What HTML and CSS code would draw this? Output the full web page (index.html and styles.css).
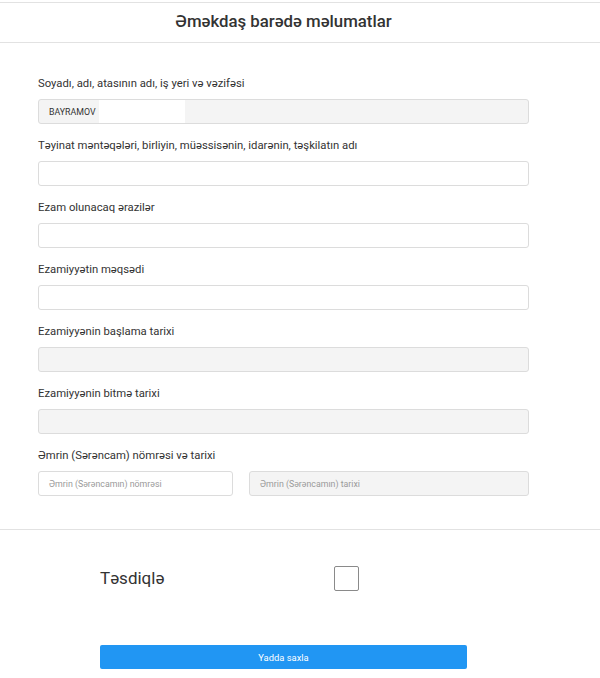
FILE: index.html
```html
<!DOCTYPE html>
<html lang="az">
<head>
<meta charset="utf-8">
<title>Əməkdaş barədə məlumatlar</title>
<link rel="stylesheet" href="styles.css">
</head>
<body>
<header class="header">
  <h1 class="title">Əməkdaş barədə məlumatlar</h1>
</header>
<main class="form">
  <div class="group">
    <div class="label">Soyadı, adı, atasının adı, iş yeri və vəzifəsi</div>
    <div class="field field-gray"><span class="value">BAYRAMOV</span><span class="redact"></span></div>
  </div>
  <div class="group">
    <div class="label">Təyinat məntəqələri, birliyin, müəssisənin, idarənin, təşkilatın adı</div>
    <div class="field"></div>
  </div>
  <div class="group">
    <div class="label">Ezam olunacaq ərazilər</div>
    <div class="field"></div>
  </div>
  <div class="group">
    <div class="label">Ezamiyyətin məqsədi</div>
    <div class="field"></div>
  </div>
  <div class="group">
    <div class="label">Ezamiyyənin başlama tarixi</div>
    <div class="field field-gray"></div>
  </div>
  <div class="group">
    <div class="label">Ezamiyyənin bitmə tarixi</div>
    <div class="field field-gray"></div>
  </div>
  <div class="group">
    <div class="label">Əmrin (Sərəncam) nömrəsi və tarixi</div>
    <div class="row">
      <div class="field"><span class="placeholder">Əmrin (Sərəncamın) nömrəsi</span></div>
      <div class="field field-gray"><span class="placeholder">Əmrin (Sərəncamın) tarixi</span></div>
    </div>
  </div>
</main>
<section class="confirm">
  <span class="confirm-label">Təsdiqlə</span>
  <span class="checkbox"></span>
</section>
<div class="actions">
  <button class="btn" type="button">Yadda saxla</button>
</div>
</body>
</html>
```
FILE: styles.css
```css
html, body {
  margin: 0;
  padding: 0;
  background: #fff;
}
body {
  font-family: Roboto, "Liberation Sans", Arial, sans-serif;
  color: #333;
  padding-top: 2px;
}
.header {
  border-top: 1px solid #e2e2e2;
  border-bottom: 1px solid #e2e2e2;
  height: 39px;
  display: flex;
  align-items: center;
  justify-content: center;
  padding-right: 33px;
}
.title {
  margin: 0;
  font-size: 16.8px;
  font-weight: 500;
  color: #333;
  position: relative;
  top: -2px;
}
.form {
  padding: 34px 0 33px 38px;
  border-bottom: 1px solid #e2e2e2;
}
.group {
  width: 491px;
  margin-bottom: 15px;
}
.group:last-child {
  margin-bottom: 0;
}
.label {
  font-size: 11.3px;
  line-height: 14px;
  height: 14px;
  margin-bottom: 8px;
  color: #333;
  white-space: nowrap;
}
.field {
  box-sizing: border-box;
  height: 25px;
  border: 1px solid #dcdcdc;
  border-radius: 3px;
  background: #fff;
  display: flex;
  align-items: center;
  padding-left: 10px;
  font-size: 8.8px;
}
.field-gray {
  background: #f4f4f4;
}
.value {
  color: #333;
  text-transform: uppercase;
}
.redact {
  display: block;
  width: 86px;
  height: 23px;
  background: #fff;
  margin-left: 3px;
}
.placeholder {
  color: #9a9a9a;
}
.row {
  display: grid;
  grid-template-columns: 195px 1fr;
  gap: 16px;
}
.confirm {
  display: flex;
  align-items: center;
  padding: 35px 0 0 100px;
  height: 26px;
}
.confirm-label {
  font-size: 17px;
  color: #333;
  width: 234px;
}
.checkbox {
  box-sizing: border-box;
  width: 25px;
  height: 25px;
  border: 1px solid #8a8a8a;
  border-radius: 2px;
  background: #fff;
}
.actions {
  padding: 54px 0 0 100px;
}
.btn {
  display: block;
  width: 367px;
  height: 24px;
  border: none;
  border-radius: 2px;
  background: #2196f3;
  color: #fff;
  font-family: Roboto, "Liberation Sans", Arial, sans-serif;
  font-size: 9.4px;
  padding: 0;
}
```
